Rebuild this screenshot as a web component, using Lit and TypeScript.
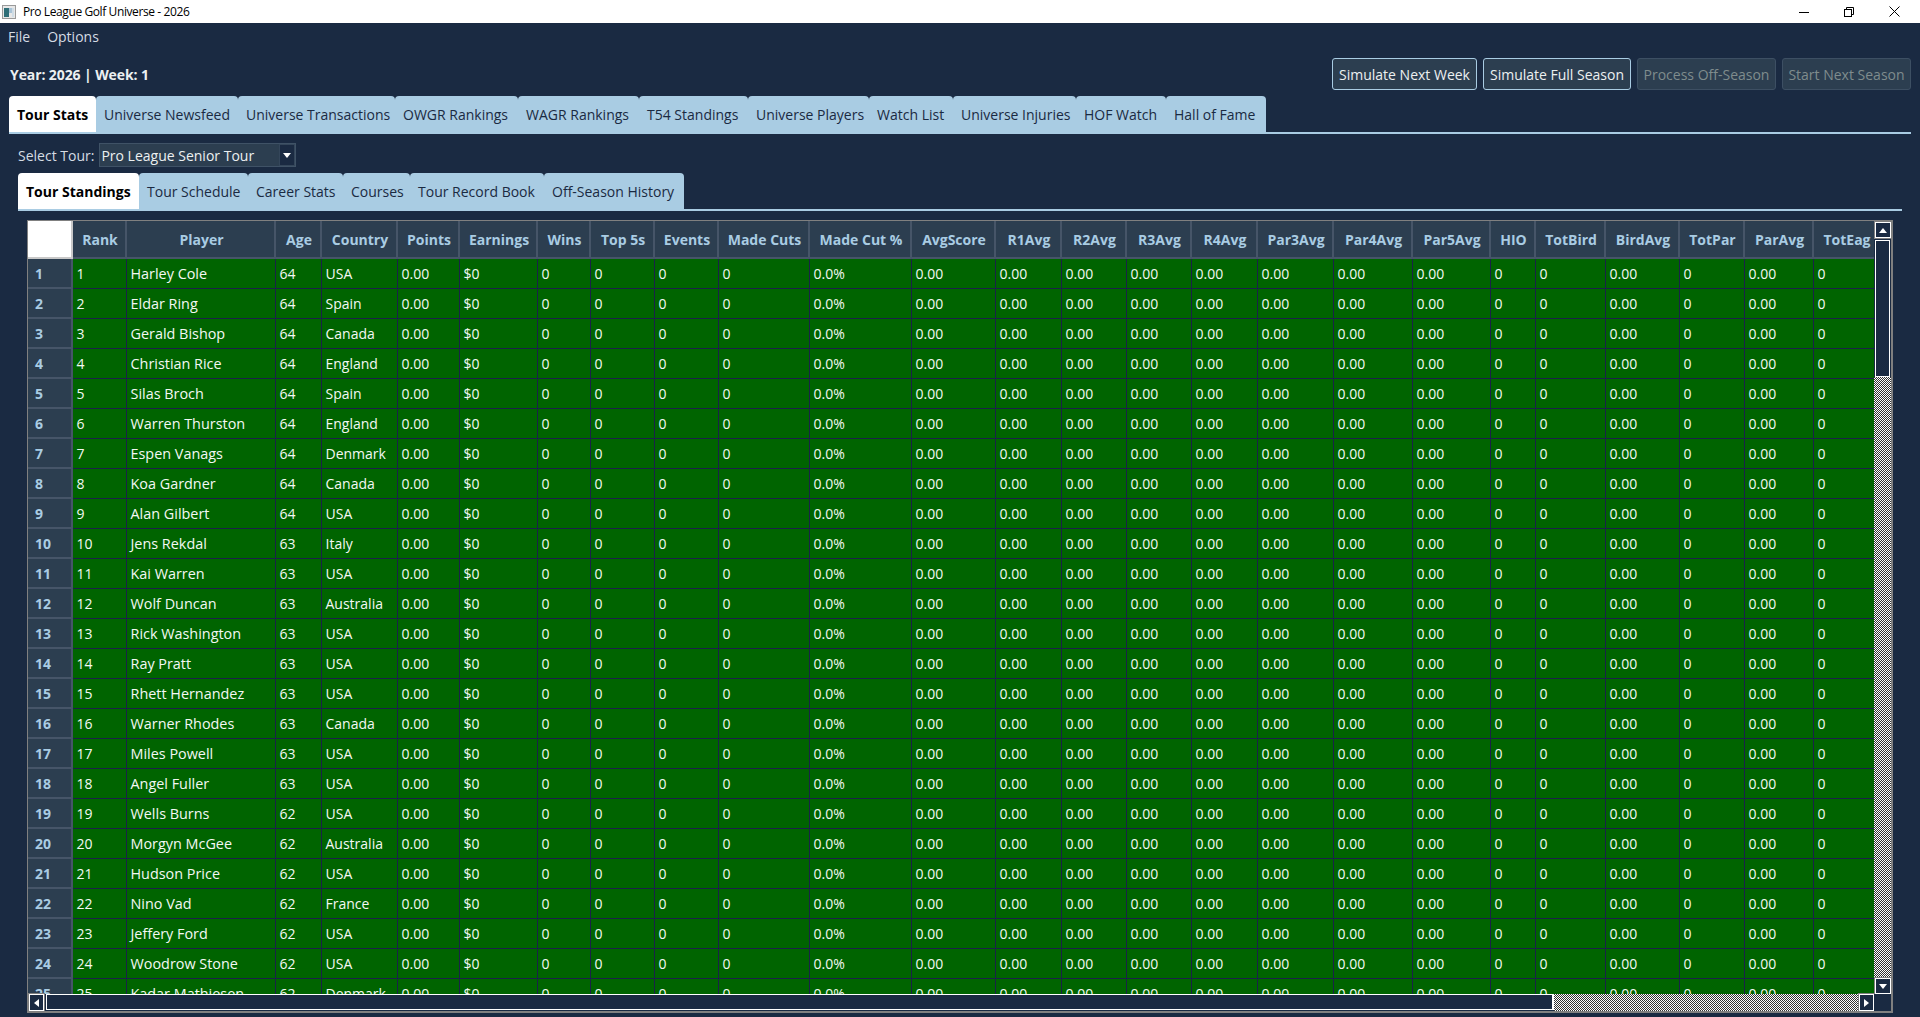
import { LitElement, html, css } from "lit";
import { customElement } from "lit/decorators.js";

const TABS: [string, number][] = [["Tour Stats", 87], ["Universe Newsfeed", 142], ["Universe Transactions", 157], ["OWGR Rankings", 123], ["WAGR Rankings", 121], ["T54 Standings", 109], ["Universe Players", 121], ["Watch List", 84], ["Universe Injuries", 123], ["HOF Watch", 90], ["Hall of Fame", 100]];
const SUB: [string, number][] = [["Tour Standings", 121], ["Tour Schedule", 109], ["Career Stats", 95], ["Courses", 67], ["Tour Record Book", 134], ["Off-Season History", 140]];
const COLS: [string, number][] = [["Rank", 54], ["Player", 149], ["Age", 46], ["Country", 76], ["Points", 62], ["Earnings", 78], ["Wins", 53], ["Top 5s", 64], ["Events", 64], ["Made Cuts", 91], ["Made Cut %", 102], ["AvgScore", 84], ["R1Avg", 66], ["R2Avg", 65], ["R3Avg", 65], ["R4Avg", 66], ["Par3Avg", 76], ["Par4Avg", 79], ["Par5Avg", 78], ["HIO", 45], ["TotBird", 70], ["BirdAvg", 74], ["TotPar", 65], ["ParAvg", 69], ["TotEag", 66]];
const PLAYERS: [string, number, string][] = [["Harley Cole", 64, "USA"], ["Eldar Ring", 64, "Spain"], ["Gerald Bishop", 64, "Canada"], ["Christian Rice", 64, "England"], ["Silas Broch", 64, "Spain"], ["Warren Thurston", 64, "England"], ["Espen Vanags", 64, "Denmark"], ["Koa Gardner", 64, "Canada"], ["Alan Gilbert", 64, "USA"], ["Jens Rekdal", 63, "Italy"], ["Kai Warren", 63, "USA"], ["Wolf Duncan", 63, "Australia"], ["Rick Washington", 63, "USA"], ["Ray Pratt", 63, "USA"], ["Rhett Hernandez", 63, "USA"], ["Warner Rhodes", 63, "Canada"], ["Miles Powell", 63, "USA"], ["Angel Fuller", 63, "USA"], ["Wells Burns", 62, "USA"], ["Morgyn McGee", 62, "Australia"], ["Hudson Price", 62, "USA"], ["Nino Vad", 62, "France"], ["Jeffery Ford", 62, "USA"], ["Woodrow Stone", 62, "USA"], ["Kadar Mathiesen", 62, "Denmark"]];
const STATS = ["0.00", "$0", "0", "0", "0", "0", "0.0%", "0.00", "0.00", "0.00", "0.00", "0.00", "0.00", "0.00", "0.00", "0", "0", "0.00", "0", "0.00", "0"];

@customElement("app-root")
export class AppRoot extends LitElement {
  static styles = css`
    :host { display: block; width: 1920px; height: 1017px; overflow: hidden; background: #1a2a42; font-family: "Open Sans", "Liberation Sans", sans-serif; font-size: 14px; color: #ecf0f1; }
    * { box-sizing: border-box; }
    .titlebar { height: 23px; background: #fff; display: flex; align-items: center; color: #000; font-size: 12px; padding-left: 2px; }
    .titlebar .name { margin-left: 7px; flex: 1; letter-spacing: -0.4px; }
    .win { display: flex; align-items: center; margin-right: 20px; gap: 35px; }
    .win svg { display: block; }
    .menu { height: 27px; display: flex; align-items: center; padding-left: 8px; gap: 17px; color: #d5dce4; }
    .top { height: 46px; display: flex; align-items: center; padding: 2px 9px 0 10px; justify-content: space-between; }
    .year { font-weight: 700; color: #ecf0f1; letter-spacing: -0.1px; }
    .btns { display: flex; gap: 6px; }
    .btn { height: 32px; border: 1px solid #a9cce3; border-radius: 3px; background: #2c3e50; color: #ecf0f1; display: flex; align-items: center; justify-content: center; }
    .btn.off { border-color: #3d4f63; color: #7f8c8d; }
    .tabs { display: flex; height: 38px; border-bottom: 2px solid #a9cce3; }
    .tabs.main { margin: 0 9px; }
    .tabs.sub { margin: 0 18px 0 18px; }
    .tab { background: #a9cce3; color: #1a2a42; height: 38px; padding: 0 0 1px 8px; border-radius: 4px 4px 0 0; display: flex; align-items: center; white-space: nowrap; flex: none; }
    .tab.on { background: #fff; color: #000; font-weight: 700; height: 36px; padding-bottom: 0; }
    .sel { display: flex; align-items: center; height: 39px; padding: 3px 18px 0; gap: 5px; }
    .sel > span { color: #d5dce4; }
    .combo { width: 197px; height: 24px; background: #2c3e50; border: 1px solid #3f5266; display: flex; align-items: center; justify-content: space-between; padding-left: 1px; }
    .combo i { width: 16px; height: 22px; background: #1a2a42; border: 1px solid #34465a; display: flex; align-items: center; justify-content: center; }
    .frame { margin: 9px 0 0 27px; width: 1866px; height: 793px; border: 1px solid #808080; border-width: 1px 2px 2px 1px; display: grid; grid-template-columns: 1fr 17px; grid-template-rows: 1fr 17px; }
    .view { overflow: hidden; min-width: 0; min-height: 0; }
    table { border-collapse: separate; border-spacing: 0; table-layout: fixed; width: 1852px; }
    th { height: 38px; padding: 0 0 0 2px; background: #2c3e50; color: #a9cce3; font-weight: 700; border-right: 2px solid #465568; border-bottom: 2px solid #465568; white-space: nowrap; overflow: hidden; }
    th.corner { background: #fff; border-color: #c8c8c8; }
    th.rh { height: 30px; text-align: left; padding-left: 7px; border-bottom-width: 2px; }
    td { height: 30px; padding: 0 0 0 3.5px; background: #006400; color: #f4f8f4; border-right: 1px solid #1a2348; border-bottom: 1px solid #1a2348; white-space: nowrap; overflow: hidden; }
    td.name { font-size: 14.4px; }
    .vbar { display: flex; flex-direction: column; }
    .hbar { display: flex; }
    .arrow { flex: none; width: 16px; height: 16px; background: #1a2a42; border: 1px solid #fff; box-shadow: 0 0 0 1px #808080; display: flex; align-items: center; justify-content: center; margin: 1px 0 0 1px; }
    .thumb { background: #1a2a42; border: 1px solid #fff; flex: none; }
    .vbar .thumb { width: 15px; height: 137px; margin: 2px 0 0 1px; }
    .hbar .thumb { height: 16px; width: 1508px; margin-left: 2px; border-right-width: 2px; }
    .track { flex: 1; background: repeating-conic-gradient(#fff 0 25%, #333 0 50%) 0 0 / 2px 2px; }
    .hbar .arrow { margin: 0 0 0 1px; width: 15px; height: 17px; }
    .corner-box { background: #1a2a42; }
  `;

  render() {
    return html`
      <div class="titlebar">
        <svg width="14" height="14" viewBox="0 0 14 14"><rect x=".5" y=".5" width="13" height="13" fill="#e8e8e8" stroke="#9a9a9a"/><rect x="2" y="3" width="5" height="9" fill="#2f6f78"/><rect x="7" y="3" width="3" height="5" fill="#a9c4d8"/><rect x="10" y="3" width="2" height="9" fill="#d0dde6"/></svg>
        <span class="name">Pro League Golf Universe - 2026</span>
        <div class="win">
          <svg width="10" height="10" viewBox="0 0 10 10"><path d="M0 5.5h10" stroke="#000"/></svg>
          <svg width="10" height="10" viewBox="0 0 10 10" fill="none" stroke="#000"><rect x=".5" y="2.500" width="7" height="7"/><path d="M2.500 2.500v-2h7v7h-2"/></svg>
          <svg width="11" height="11" viewBox="0 0 11 11" fill="none" stroke="#000"><path d="M.5.5l10 10M10.500.5l-10 10"/></svg>
        </div>
      </div>
      <div class="menu"><span>File</span><span>Options</span></div>
      <div class="top">
        <span class="year">Year: 2026 | Week: 1</span>
        <div class="btns">
          <div class="btn" style="width:145px">Simulate Next Week</div>
          <div class="btn" style="width:148px">Simulate Full Season</div>
          <div class="btn off" style="width:139px">Process Off-Season</div>
          <div class="btn off" style="width:129px">Start Next Season</div>
        </div>
      </div>
      <div class="tabs main">${TABS.map(([t, w], i) => html`<div class="tab ${i === 0 ? "on" : ""}" style="width:${w}px">${t}</div>`)}</div>
      <div class="sel">
        <span>Select Tour:</span>
        <div class="combo"><span>Pro League Senior Tour</span><i><svg width="8" height="5" viewBox="0 0 8 5"><path d="M0 0h8L4 5z" fill="#fff"/></svg></i></div>
      </div>
      <div class="tabs sub">${SUB.map(([t, w], i) => html`<div class="tab ${i === 0 ? "on" : ""}" style="width:${w}px">${t}</div>`)}</div>
      <div class="frame">
        <div class="view">
          <table>
            <colgroup><col style="width:45px" />${COLS.map(([, w]) => html`<col style="width:${w}px" />`)}</colgroup>
            <thead><tr><th class="corner"></th>${COLS.map(([c]) => html`<th>${c}</th>`)}</tr></thead>
            <tbody>
              ${PLAYERS.map(([n, a, c], i) => html`<tr>
                <th class="rh">${i + 1}</th><td>${i + 1}</td><td class="name">${n}</td><td>${a}</td><td>${c}</td>
                ${STATS.map((s) => html`<td>${s}</td>`)}
              </tr>`)}
            </tbody>
          </table>
        </div>
        <div class="vbar">
          <div class="arrow"><svg width="8" height="5" viewBox="0 0 8 5"><path d="M0 5h8L4 0z" fill="#fff"/></svg></div>
          <div class="thumb"></div>
          <div class="track"></div>
          <div class="arrow"><svg width="8" height="5" viewBox="0 0 8 5"><path d="M0 0h8L4 5z" fill="#fff"/></svg></div>
        </div>
        <div class="hbar">
          <div class="arrow"><svg width="5" height="8" viewBox="0 0 5 8"><path d="M5 0v8L0 4z" fill="#fff"/></svg></div>
          <div class="thumb"></div>
          <div class="track"></div>
          <div class="arrow"><svg width="5" height="8" viewBox="0 0 5 8"><path d="M0 0v8l5-4z" fill="#fff"/></svg></div>
        </div>
        <div class="corner-box"></div>
      </div>
    `;
  }
}
